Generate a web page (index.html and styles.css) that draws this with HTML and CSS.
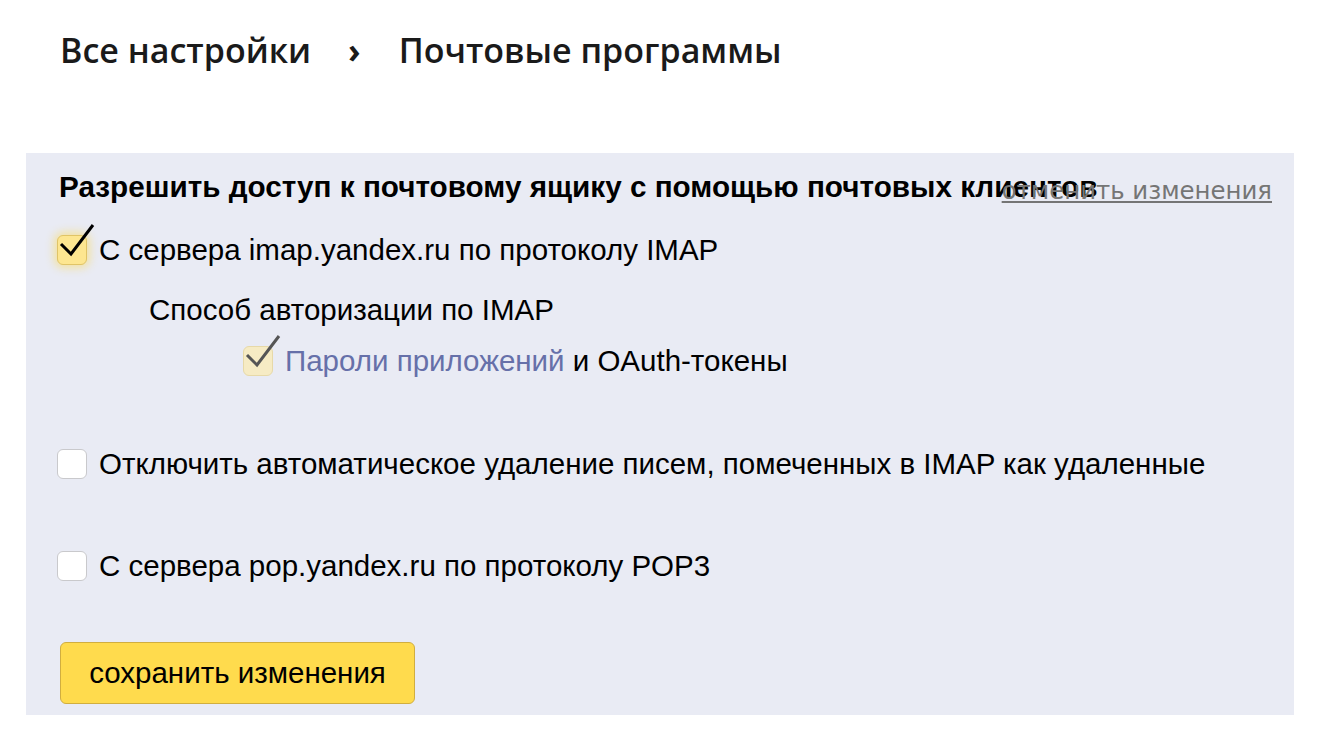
FILE: index.html
```html
<!DOCTYPE html>
<html lang="ru">
<head>
<meta charset="utf-8">
<link rel="stylesheet" href="styles.css">
</head>
<body>
<h1 class="crumbs"><span class="crumb">Все настройки</span><span class="sep">›</span><span class="crumb">Почтовые программы</span></h1>
<div class="panel">
  <a class="cancel" href="#">отменить изменения</a>
  <div class="heading">Разрешить доступ к почтовому ящику с помощью почтовых клиентов</div>
  <label class="row row-imap">
    <span class="box box-on"><svg class="tick" viewBox="0 0 40 45" width="40" height="45"><polyline points="4,21 14,31 36,2" fill="none" stroke="#000" stroke-width="3"/></svg></span>
    <span class="txt">С сервера imap.yandex.ru по протоколу IMAP</span>
  </label>
  <div class="auth-label">Способ авторизации по IMAP</div>
  <label class="row row-sub">
    <span class="box box-dim"><svg class="tick" viewBox="0 0 40 45" width="40" height="45"><polyline points="4,21 14,31 36,2" fill="none" stroke="#555" stroke-width="3"/></svg></span>
    <span class="txt"><a class="link" href="#">Пароли приложений</a> и OAuth-токены</span>
  </label>
  <label class="row row-del">
    <span class="box"></span>
    <span class="txt">Отключить автоматическое удаление писем, помеченных в IMAP как удаленные</span>
  </label>
  <label class="row row-pop">
    <span class="box"></span>
    <span class="txt">С сервера pop.yandex.ru по протоколу POP3</span>
  </label>
  <button class="save" type="button">сохранить изменения</button>
</div>
</body>
</html>
```
FILE: styles.css
```css
html, body {
  margin: 0;
  padding: 0;
  background: #fff;
}
body {
  font-family: "Liberation Sans", Arial, sans-serif;
  color: #000;
}
.crumbs {
  margin: 0;
  padding: 28px 0 0 60px;
  height: 153px;
  box-sizing: border-box;
  font-family: "Open Sans", "Noto Sans", sans-serif;
  font-weight: 600;
  font-size: 34px;
  line-height: 44px;
  color: #1a1a1a;
  display: flex;
}
.sep {
  margin: 0 38px 0 37px;
  font-weight: 700;
}
.panel {
  position: relative;
  margin-left: 26px;
  width: 1268px;
  height: 562px;
  box-sizing: border-box;
  background: #e9ebf4;
  padding: 17px 0 0 31px;
  display: flex;
  flex-direction: column;
  align-items: flex-start;
}
.cancel {
  position: absolute;
  right: 22px;
  top: 23px;
  font-family: "DejaVu Sans", Verdana, sans-serif;
  font-size: 24.4px;
  line-height: 30px;
  color: #757575;
  text-decoration: underline;
}
.heading {
  font-weight: bold;
  font-size: 29.7px;
  line-height: 34px;
  margin-left: 2px;
}
.row {
  display: flex;
  align-items: center;
  gap: 12px;
  font-size: 29.5px;
  line-height: 34px;
}
.box {
  position: relative;
  width: 28px;
  height: 28px;
  border: 1px solid #c9c9cc;
  border-radius: 6px;
  background: #fff;
  flex: none;
}
.box-on {
  background: #fde690;
  border-color: #e0c467;
  box-shadow: 0 0 8px 3px rgba(255, 214, 60, 0.45);
}
.box-dim {
  background: #f6ebc4;
  border-color: #e7d9a8;
}
.tick {
  position: absolute;
  left: -1px;
  top: -13px;
}
.row-imap { margin-top: 29px; }
.auth-label {
  font-size: 29.5px;
  line-height: 34px;
  margin-top: 26px;
  margin-left: 92px;
}
.row-sub {
  margin-top: 17px;
  margin-left: 186px;
}
.link {
  color: #6670a9;
  text-decoration: none;
}
.row-del { margin-top: 69px; }
.row-pop { margin-top: 68px; }
.save {
  margin-top: 59px;
  margin-left: 3px;
  width: 355px;
  height: 62px;
  background: #ffdb4d;
  border: 1px solid #d1ae3f;
  border-radius: 6px;
  font-family: "Liberation Sans", Arial, sans-serif;
  font-size: 29.5px;
  color: #000;
  padding: 0;
}
```
